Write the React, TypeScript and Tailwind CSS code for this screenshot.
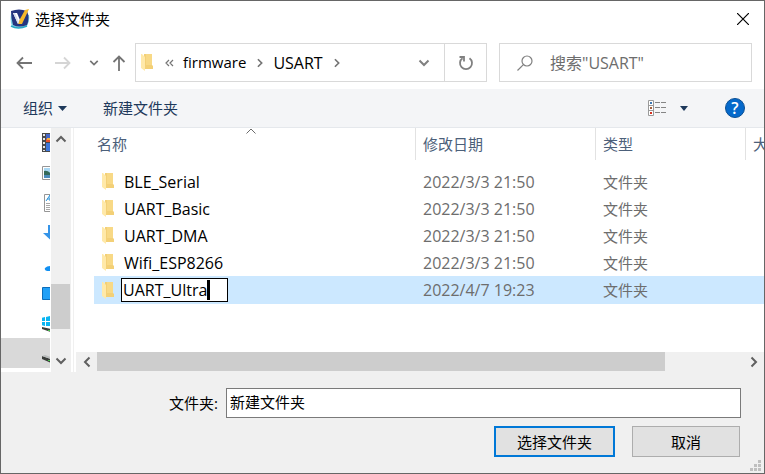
import React, { useState } from "react";

const folders = [
  { name: "BLE_Serial", date: "2022/3/3 21:50" },
  { name: "UART_Basic", date: "2022/3/3 21:50" },
  { name: "UART_DMA", date: "2022/3/3 21:50" },
  { name: "Wifi_ESP8266", date: "2022/3/3 21:50" },
];

function AppLogo() {
  return (
    <svg width="20" height="20" viewBox="0 0 20 20" aria-hidden="true">
      <path d="M1 5 Q0 14 2 17 Q8 21 17 17 Q20 12 19 6 Z" fill="#7fd0e4" />
      <path d="M1 17 Q8 21 17 17" stroke="#27a8c4" strokeWidth="1.5" fill="none" />
      <path d="M1 2 Q9 -1 17 2 Q20 9 17 16 Q9 19 3 16 Q1 9 1 2Z" fill="#25357f" />
      <path d="M3 4 L7 4 L10 11 L8 15 Z" fill="#fff" />
      <path d="M8 15 L10 10 L15 1 L19 0 L12 15 Z" fill="#f6b92b" />
      <path d="M3 4 L5 4 L9 13 L8 15Z" fill="#d9dfef" />
    </svg>
  );
}

function Folder() {
  return (
    <svg width="12" height="17" viewBox="0 0 12 17" aria-hidden="true">
      <path d="M3 0H11V11L12 12V15H3Z" fill="#f3d077" />
      <path d="M5 0H11V11H5Z" fill="#f8d986" />
      <path d="M0 0L1 0L4 3V17L0 14Z" fill="#ffe9a9" />
    </svg>
  );
}

function Chevron({ dir, size = 12, color = "#606060", width = 2 }: { dir: "up" | "down" | "left" | "right"; size?: number; color?: string; width?: number }) {
  const d = {
    up: "M1.5 8.5L6 4L10.5 8.5",
    down: "M1.5 3.5L6 8L10.5 3.5",
    left: "M8.5 1.5L4 6L8.5 10.5",
    right: "M3.5 1.5L8 6L3.5 10.5",
  }[dir];
  return (
    <svg width={size} height={size} viewBox="0 0 12 12" fill="none" stroke={color} strokeWidth={width} aria-hidden="true">
      <path d={d} />
    </svg>
  );
}

function Arrow({ dir, color }: { dir: "left" | "right" | "up"; color: string }) {
  const d = {
    left: "M16 8H1.5M7 2.5L1.5 8L7 13.5",
    right: "M0 8H14.5M9 2.5L14.5 8L9 13.5",
    up: "M8 16V1.5M2.5 7L8 1.5L13.5 7",
  }[dir];
  return (
    <svg width="16" height="16" viewBox="0 0 16 16" fill="none" stroke={color} strokeWidth="1.8" aria-hidden="true">
      <path d={d} />
    </svg>
  );
}

const places: { label: string; art: React.ReactNode }[] = [
  {
    label: "视频",
    art: (
      <>
        <path d="M0 0H9V19H0Z" fill="#4a4a4a" />
        <path d="M1 1h2v2h-2zM1 5h2v2h-2zM1 9h2v2h-2zM1 13h2v2h-2zM1 17h2v1h-2z" fill="#e8e8e8" />
        <path d="M4 1H9V9H4Z" fill="#4668c8" />
        <path d="M4 6H9V9H4Z" fill="#e8512c" />
        <path d="M5 5h4v2h-4z" fill="#f5b03e" />
        <path d="M4 10H9V18H4Z" fill="#3e77da" />
      </>
    ),
  },
  {
    label: "图片",
    art: (
      <>
        <path d="M.5 3.5H10V16.5H.5Z" fill="#fff" stroke="#969696" />
        <path d="M2 5H9V10H2Z" fill="#a9d8f4" />
        <path d="M2 8Q6 7 9 11V15H2Z" fill="#356b5a" />
        <path d="M2 12H9V15H2Z" fill="#4d8cbb" />
      </>
    ),
  },
  {
    label: "文档",
    art: (
      <>
        <path d="M2.5 1.5H10V18.5H2.5Z" fill="#fff" stroke="#969696" />
        <path d="M4 8L8 2V8M5 6H9" stroke="#2b93d9" fill="none" />
        <path d="M4 10.5H9M4 12.5H9M4 14.5H9M4 16.5H9" stroke="#a8a8a8" />
      </>
    ),
  },
  { label: "下载", art: <path d="M6 2H12V10H16L8.500 17L1 10H6Z" fill="#3594e8" /> },
  { label: "云盘", art: <path d="M5 18Q2 17 3 15Q5 13 9 13V18Z" fill="#1290f2" /> },
  {
    label: "桌面",
    art: <path d="M.5 4.500H10V16.500H.5Z" fill="#21a0f7" stroke="#0c6dbb" />,
  },
  {
    label: "本地磁盘 (C:)",
    art: (
      <>
        <path d="M-1 5L3 4V8H-1ZM4 4L8 3V8H4ZM-1 9H3V13L-1 12ZM4 9H8V13H4Z" fill="#09b5f2" />
        <path d="M0 14L9 16V19L0 16Z" fill="#3a3d3a" />
        <path d="M6 17h2v1h-2z" fill="#46c14b" />
      </>
    ),
  },
  {
    label: "本地磁盘 (D:)",
    art: (
      <>
        <path d="M0 13L9 16V20L0 16Z" fill="#3a3d3a" />
        <path d="M0 13L3 12L9 14V16Z" fill="#b9bcbc" />
        <path d="M6 17h2v1h-2z" fill="#46c14b" />
      </>
    ),
  },
];

function Sidebar() {
  return (
    <nav aria-label="位置" className="w-[50px] shrink-0 overflow-hidden pr-px">
      {places.map((p, i) => (
        <button
          key={p.label}
          type="button"
          aria-label={p.label}
          className={"flex h-[30px] w-full items-center justify-end " + (i === 7 ? "bg-[#d9d9d9]" : "")}
        >
          <svg width="8" height="20" viewBox="0 0 8 20" aria-hidden="true">
            {p.art}
          </svg>
        </button>
      ))}
    </nav>
  );
}

function VerticalScroll() {
  return (
    <div className="flex w-5 shrink-0 flex-col items-center bg-[#f0f0f0]">
      <button type="button" aria-label="向上滚动" className="flex h-[22px] items-center">
        <Chevron dir="up" />
      </button>
      <div className="flex-[134]" />
      <div className="w-full flex-[45] border-r border-[#f0f0f0] bg-[#cdcdcd]" />
      <div className="flex-[21]" />
      <button type="button" aria-label="向下滚动" className="flex h-[22px] items-center">
        <Chevron dir="down" />
      </button>
    </div>
  );
}

function HorizontalScroll() {
  return (
    <div className="flex h-5 shrink-0 bg-[#f0f0f0] pb-px">
      <button type="button" aria-label="向左滚动" className="flex w-[21px] items-center justify-center">
        <Chevron dir="left" />
      </button>
      <div className="flex-1">
        <div className="h-full w-[88%] bg-[#cdcdcd]" />
      </div>
      <button type="button" aria-label="向右滚动" className="flex w-[21px] items-center justify-center">
        <Chevron dir="right" />
      </button>
    </div>
  );
}

function FileTable() {
  const [draft, setDraft] = useState("UART_Ultra");
  return (
    <table className="ml-[18px] w-[calc(100%-18px)] table-fixed border-collapse text-left">
      <colgroup>
        <col />
        <col className="w-[180px]" />
        <col className="w-[150px]" />
        <col className="w-[19px]" />
      </colgroup>
      <thead className="text-[15px] leading-8 text-[#4c607a]">
        <tr>
          <th className="relative p-0 pb-2 font-normal">
            <div className="h-8 pl-[3px]">名称</div>
            <span className="absolute -top-[3px] left-[49%] -translate-x-1/2 leading-none">
              <Chevron dir="up" color="#6b6b6b" width={1} />
            </span>
          </th>
          {["修改日期", "类型", "大小"].map((h) => (
            <th key={h} className="overflow-hidden p-0 pb-2 font-normal">
              <div className="h-8 overflow-hidden border-l border-[#e2e2e2] pl-[7px] whitespace-nowrap">{h}</div>
            </th>
          ))}
        </tr>
      </thead>
      <tbody className="text-[#6d6d6d]">
        {folders.map((f) => (
          <tr key={f.name} className="h-[27px]">
            <td className="p-0">
              <div className="flex items-center pl-2 text-black">
                <Folder />
                <span className="ml-[10px] text-base leading-6">{f.name}</span>
              </div>
            </td>
            <td className="p-0 pl-2 text-base leading-6">{f.date}</td>
            <td className="p-0 pl-2 text-[15px] leading-6">文件夹</td>
            <td className="p-0" />
          </tr>
        ))}
        <tr className="h-7 bg-[#cce8ff]">
          <td className="p-0">
            <div className="flex items-center pl-2 text-black">
              <Folder />
              <div className="ml-[7px] flex h-6 w-[107px] items-center border border-black bg-white pl-px">
                <input
                  aria-label="文件夹名称"
                  value={draft}
                  onChange={(e) => setDraft(e.target.value)}
                  className="[field-sizing:content] max-w-full min-w-0 text-base leading-5 outline-none"
                />
                <span className="h-5 w-[3px] bg-black" />
              </div>
            </div>
          </td>
          <td className="p-0 pl-2 text-base leading-6">2022/4/7 19:23</td>
          <td className="p-0 pl-2 text-[15px] leading-6">文件夹</td>
          <td className="p-0" />
        </tr>
      </tbody>
    </table>
  );
}

function AddressRow() {
  return (
    <div className="flex h-[39px] items-stretch pr-3 pl-[15px]">
      <div className="flex w-[119px] items-center">
        <button type="button" aria-label="后退"><Arrow dir="left" color="#747474" /></button>
        <button type="button" aria-label="前进" className="ml-[23px]"><Arrow dir="right" color="#d5d5d5" /></button>
        <button type="button" aria-label="最近的位置" className="ml-[18px]"><Chevron dir="down" size={10} color="#747474" width={2} /></button>
        <button type="button" aria-label="上移" className="ml-[12px] pt-px"><Arrow dir="up" color="#747474" /></button>
      </div>
      <div className="flex flex-1 border border-[#d9d9d9]">
        <div className="flex flex-1 items-center pl-[5px] text-[15px]">
          <Folder />
          <svg className="ml-3" width="9" height="8" viewBox="0 0 9 8" fill="none" stroke="#747474" strokeWidth="1.2" aria-hidden="true">
            <path d="M4 1L1 4L4 7M8 1L5 4L8 7" />
          </svg>
          <button type="button" className="ml-[9px]">firmware</button>
          <span className="ml-1 flex w-5 justify-center"><Chevron dir="right" size={10} color="#747474" /></span>
          <button type="button" className="ml-[3px] text-base">USART</button>
          <span className="ml-1 flex w-5 justify-center"><Chevron dir="right" size={10} color="#747474" /></span>
          <button type="button" aria-label="以前的位置" className="mr-[14px] ml-auto">
            <Chevron dir="down" color="#808080" />
          </button>
        </div>
        <button type="button" aria-label="刷新" className="flex w-[42px] items-center justify-center border-l border-[#d9d9d9]">
          <svg width="16" height="16" viewBox="0 0 16 16" fill="none" stroke="#808080" strokeWidth="1.8" aria-hidden="true">
            <path d="M11.500 3.200A6 6 0 1 1 4.500 3.200M1.500 2H6V6.500" />
          </svg>
        </button>
      </div>
      <label className="ml-3 flex w-[253px] items-center border border-[#d9d9d9] pl-[17px]">
        <svg className="shrink-0" width="16" height="16" viewBox="0 0 16 16" fill="none" stroke="#808080" strokeWidth="1.2" aria-hidden="true">
          <circle cx="10" cy="6" r="5" />
          <path d="M6.400 9.600L.5 15.500" />
        </svg>
        <input
          type="search"
          aria-label="搜索"
          placeholder={'搜索"USART"'}
          className="ml-[17px] w-full min-w-0 text-base leading-6 outline-none placeholder:text-[#6d6d6d]"
        />
      </label>
    </div>
  );
}

function Toolbar() {
  return (
    <div className="mt-[7px] flex h-[39px] items-center border-b border-[#e5e8ec] bg-[#f4f5f7] pr-[19px] pl-[22px] text-[15px] leading-6 text-[#1e395b]">
      <button type="button" className="flex items-center gap-[5px]">
        组织
        <svg width="9" height="5" viewBox="0 0 9 5" aria-hidden="true"><path d="M0 0H9L4.500 5Z" fill="#1e395b" /></svg>
      </button>
      <button type="button" className="ml-9">新建文件夹</button>
      <button type="button" aria-label="更改视图" className="ml-auto">
        <svg width="19" height="16" viewBox="0 0 19 16" fill="none" aria-hidden="true">
          <path d="M.5 .5H5.500V15.500H.5ZM.5 5.500H5.500M.5 10.500H5.500" stroke="#9a9a9a" fill="#fff" />
          <path d="M7 2.500H12M13 2.500H18M7 7.500H12M13 7.500H18M7 12.500H12M13 12.500H18" stroke="#858585" />
          <path d="M2 2h2v2h-2z" fill="#3c78b5" />
          <path d="M2 7h2v2h-2z" fill="#a35f3d" />
          <path d="M2 12h2v2h-2z" fill="#d5301e" />
        </svg>
      </button>
      <button type="button" aria-label="更多视图选项" className="ml-[13px]">
        <svg width="8" height="5" viewBox="0 0 8 5" aria-hidden="true"><path d="M0 0H8L4 5Z" fill="#1e395b" /></svg>
      </button>
      <button type="button" aria-label="帮助" className="ml-[37px] flex size-5 items-center justify-center rounded-full border border-[#0b4f94] bg-[#0569cb] text-base leading-5 font-semibold text-white">
        ?
      </button>
    </div>
  );
}

export default function App() {
  return (
    <main className="flex min-h-screen w-full flex-col border border-[#666] bg-white font-['Open_Sans','Noto_Sans_CJK_SC',sans-serif] text-black">
      <header className="flex h-[42px] items-center pr-[15px] pb-[6px] pl-[9px]">
        <AppLogo />
        <h1 className="ml-[5px] text-[15px] leading-6">选择文件夹</h1>
        <button type="button" aria-label="关闭" className="ml-auto">
          <svg width="12" height="12" viewBox="0 0 12 12" stroke="#000" strokeWidth="1.2" aria-hidden="true">
            <path d="M0 0L12 12M12 0L0 12" />
          </svg>
        </button>
      </header>
      <AddressRow />
      <Toolbar />
      <div className="flex min-h-[244px] flex-1">
        <Sidebar />
        <VerticalScroll />
        <div className="ml-[2px] flex min-w-0 flex-1 flex-col border-l border-[#f0f0f0] pl-[2px]">
          <div className="flex-1 overflow-hidden">
            <FileTable />
          </div>
          <HorizontalScroll />
        </div>
      </div>
      <footer className="bg-[#f0f0f0] pt-4 pr-[3px] pb-[2px] text-[15px]">
        <div className="flex items-center justify-end pr-5">
          <label htmlFor="folder" className="w-[217px] text-right leading-6">文件夹:</label>
          <input
            id="folder"
            defaultValue="新建文件夹"
            className="ml-2 h-[30px] min-w-0 flex-1 border border-[#7a7a7a] bg-white px-[3px] pb-1 leading-6 outline-none"
          />
        </div>
        <div className="mt-2 flex justify-end gap-[17px] pr-[21px]">
          <button type="button" className="h-[31px] w-[121px] border-2 border-[#0078d7] bg-[#e1e1e1] leading-6">选择文件夹</button>
          <button type="button" className="h-[31px] w-[108px] border border-[#adadad] bg-[#e1e1e1] leading-6">取消</button>
        </div>
        <div className="mt-[3px] flex justify-end">
          <svg width="11" height="11" viewBox="0 0 11 11" fill="#bfbfbf" aria-hidden="true">
            <path d="M8 0h3v3h-3zM4 4h3v3h-3zM8 4h3v3h-3zM0 8h3v3h-3zM4 8h3v3h-3zM8 8h3v3h-3z" />
          </svg>
        </div>
      </footer>
    </main>
  );
}
